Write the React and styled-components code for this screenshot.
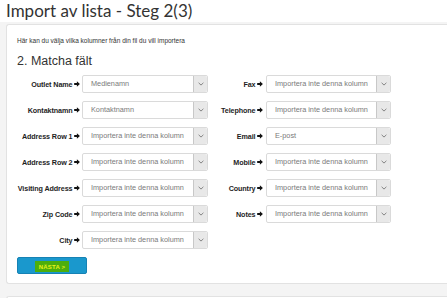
import React from 'react';
import styled, { createGlobalStyle } from 'styled-components';

const Global = createGlobalStyle`
  html, body { margin: 0; padding: 0; background: #fff; }
  body {
    font-family: "Liberation Sans", Arial, sans-serif;
    width: 447px;
    height: 298px;
    overflow: hidden;
  }
`;

const Page = styled.div`
  display: flex;
  flex-direction: column;
  height: 298px;
  overflow: hidden;
`;

const TitleBar = styled.header`
  height: 22px;
  padding-left: 6px;
  background: #fff;
  display: flex;
  align-items: center;
`;

const Title = styled.h1`
  margin: 0;
  font-family: Lato, "Liberation Sans", sans-serif;
  font-weight: 400;
  font-size: 17px;
  line-height: 22px;
  color: #333;
  white-space: nowrap;
`;

const Main = styled.main`
  flex: 1;
  background: #f4f4f4;
  padding: 2px 0 0 6px;
  display: flex;
  flex-direction: column;
  gap: 12px;
`;

const Card = styled.section`
  background: #fff;
  border: 1px solid #e2e2e2;
  border-right: none;
  border-radius: 3px 0 0 3px;
  padding: 11px 0 9px 10px;
  min-height: ${p => p.$minHeight || 0}px;
`;

const Intro = styled.p`
  margin: 0;
  font-size: 6.5px;
  line-height: 10px;
  color: #333;
`;

const Heading = styled.h2`
  margin: 8px 0 0;
  font-weight: 400;
  font-size: 12.5px;
  line-height: 15px;
  color: #333;
`;

const Fields = styled.div`
  display: flex;
  margin-top: 6px;
`;

const Column = styled.div`
  display: flex;
  flex-direction: column;
  gap: 8px;
`;

const Row = styled.div`
  display: flex;
  align-items: center;
  height: 18px;
`;

const Label = styled.label`
  width: ${p => p.$width}px;
  padding-right: ${p => p.$gap}px;
  box-sizing: border-box;
  display: flex;
  justify-content: flex-end;
  align-items: center;
  gap: 1.5px;
  font-size: 7.2px;
  font-weight: 700;
  color: #1e1e1e;
  white-space: nowrap;
  letter-spacing: -0.1px;
`;

const SelectBox = styled.div`
  width: ${p => p.$width}px;
  height: 18px;
  box-sizing: border-box;
  border: 1px solid #dadada;
  border-radius: 2px;
  background: #fff;
  display: flex;
  align-items: stretch;
`;

const SelectText = styled.span`
  flex: 1;
  padding-left: 8px;
  font-size: 7.3px;
  line-height: 16px;
  color: #7a7a7a;
  white-space: nowrap;
  overflow: hidden;
`;

const DropButton = styled.span`
  width: 13px;
  background: #e8e8e8;
  border-left: 1px solid #c8c8c8;
  border-radius: 0 2px 2px 0;
  display: flex;
  align-items: center;
  justify-content: center;
`;

const NextButton = styled.button`
  margin-top: 8px;
  width: 70px;
  height: 17px;
  padding: 0;
  background: #1a98cd;
  border: 1px solid #1682b4;
  border-radius: 2px;
  display: flex;
  align-items: center;
  justify-content: center;
  cursor: pointer;
`;

const Highlight = styled.span`
  background: #4cae0c;
  color: #e8f21a;
  font-family: "Liberation Sans", Arial, sans-serif;
  font-weight: 700;
  font-size: 6px;
  letter-spacing: 0.2px;
  padding: 3px 4px 2px;
  margin-top: 2px;
`;

const Arrow = () => (
  <svg width="6" height="6" viewBox="0 0 10 10" aria-hidden="true">
    <path d="M0.3 3.4 H4.8 V0.5 L9.8 5 L4.8 9.5 V6.6 H0.3 Z" fill="#111" />
  </svg>
);

const Chevron = () => (
  <svg width="6" height="4" viewBox="0 0 6 4" aria-hidden="true">
    <path d="M0.6 0.8 L3 3.1 L5.4 0.8" fill="none" stroke="#6a6a6a" strokeWidth="0.8" />
  </svg>
);

const NONE = 'Importera inte denna kolumn';

const leftFields = [
  ['Outlet Name', 'Medienamn'],
  ['Kontaktnamn', 'Kontaktnamn'],
  ['Address Row 1', NONE],
  ['Address Row 2', NONE],
  ['Visiting Address', NONE],
  ['Zip Code', NONE],
  ['City', NONE],
];

const rightFields = [
  ['Fax', NONE],
  ['Telephone', NONE],
  ['Email', 'E-post'],
  ['Mobile', NONE],
  ['Country', NONE],
  ['Notes', NONE],
];

const Field = ({ label, value, labelWidth, gap, selectWidth }) => (
  <Row>
    <Label $width={labelWidth} $gap={gap}>
      {label}
      <Arrow />
    </Label>
    <SelectBox $width={selectWidth}>
      <SelectText>{value}</SelectText>
      <DropButton>
        <Chevron />
      </DropButton>
    </SelectBox>
  </Row>
);

export default function App() {
  return (
    <>
      <Global />
      <Page>
        <TitleBar>
          <Title>Import av lista - Steg 2(3)</Title>
        </TitleBar>
        <Main>
          <Card>
            <Intro>Här kan du välja vilka kolumner från din fil du vill importera</Intro>
            <Heading>2. Matcha fält</Heading>
            <Fields>
              <Column>
                {leftFields.map(([l, v]) => (
                  <Field key={l} label={l} value={v} labelWidth={65} gap={2} selectWidth={126} />
                ))}
              </Column>
              <Column>
                {rightFields.map(([l, v]) => (
                  <Field key={l} label={l} value={v} labelWidth={58} gap={3} selectWidth={125} />
                ))}
              </Column>
            </Fields>
            <NextButton>
              <Highlight>NÄSTA &gt;</Highlight>
            </NextButton>
          </Card>
          <Card $minHeight={20} />
        </Main>
      </Page>
    </>
  );
}
